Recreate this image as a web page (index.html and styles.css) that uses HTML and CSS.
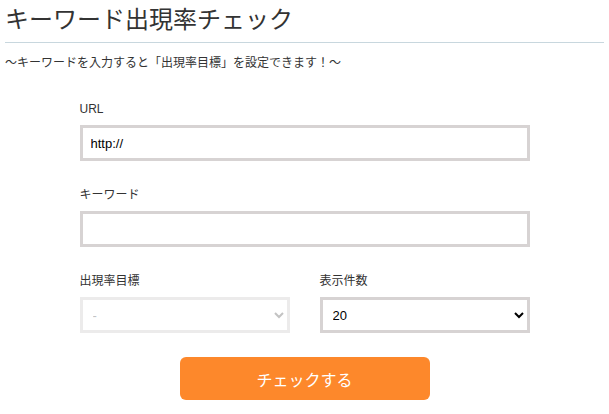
FILE: index.html
```html
<!DOCTYPE html>
<html lang="ja">
<head>
  <meta charset="UTF-8" />
  <meta name="viewport" content="width=device-width, initial-scale=1" />
  <title>キーワード出現率チェック</title>
  <link rel="stylesheet" href="styles.css">
</head>
<body>
  <h1 class="title">キーワード出現率チェック</h1>
  <p class="lead">〜キーワードを入力すると「出現率目標」を設定できます！〜</p>

  <!-- Check form -->
  <form class="check-form" onsubmit="return false;">
    <div class="field">
      <label for="url">URL</label>
      <input type="text" id="url" value="http://" />
    </div>
    <div class="field">
      <label for="keyword">キーワード</label>
      <input type="text" id="keyword" />
    </div>
    <div class="field-row">
      <div class="field">
        <label for="rate">出現率目標</label>
        <select id="rate" disabled>
          <option>-</option>
        </select>
      </div>
      <div class="field">
        <label for="count">表示件数</label>
        <select id="count">
          <option>10</option>
          <option selected>20</option>
          <option>50</option>
        </select>
      </div>
    </div>
    <div class="actions">
      <button type="submit" class="btn-check">チェックする</button>
    </div>
  </form>
</body>
</html>
```

FILE: styles.css
```css
body {
  margin: 0;
  padding: 0 5px;
  font-family: 'Liberation Sans', 'Noto Sans CJK JP', sans-serif;
  color: #333;
  background: #fff;
}
.title {
  margin: 0;
  padding: 5px 0 7px;
  font-size: 24px;
  line-height: 30px;
  font-weight: normal;
  border-bottom: 1px solid #c8d7de;
}
.lead {
  margin: 10px 0 0;
  font-size: 12px;
  line-height: 20px;
}
.check-form {
  width: 450px;
  margin: 28px auto 0;
}
.field {
  margin-bottom: 26px;
}
.field label {
  display: block;
  font-size: 12px;
  line-height: 16px;
  margin-bottom: 8px;
}
input, select {
  box-sizing: border-box;
  width: 100%;
  height: 36px;
  border: 3px solid #d7d3d3;
  border-radius: 0;
  background: #fff;
  font-family: inherit;
  font-size: 13px;
  color: #000;
  margin: 0;
}
input {
  padding: 0 8px;
  outline: none;
}
select {
  padding: 0 6px;
}
select:disabled {
  color: #aaa;
  border-color: #e5e3e3;
}
.field-row {
  display: grid;
  grid-template-columns: 1fr 1fr;
  gap: 30px;
}
.field-row .field {
  margin-bottom: 24px;
}
.actions {
  text-align: center;
}
.btn-check {
  width: 250px;
  height: 43px;
  border: none;
  border-radius: 6px;
  background: #fd882b;
  color: #fff;
  font-family: inherit;
  font-size: 16px;
  cursor: pointer;
}
```
